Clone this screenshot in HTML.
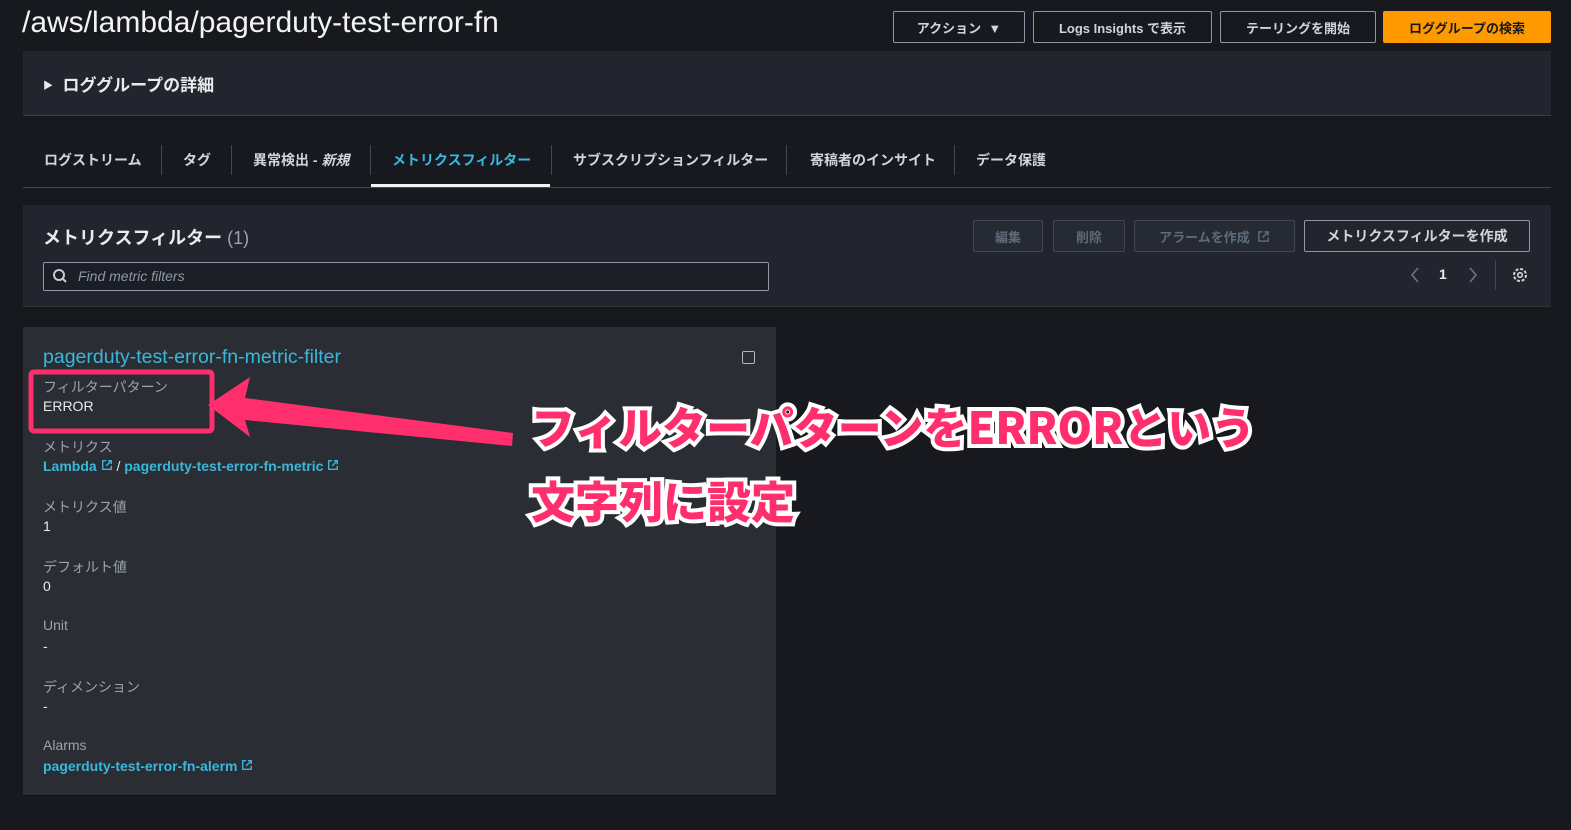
<!DOCTYPE html>
<html><head><meta charset="utf-8"><style>
*{box-sizing:border-box;margin:0;padding:0}
body{width:1571px;height:830px;background:#17191e;font-family:"Liberation Sans","Noto Sans CJK JP",sans-serif;color:#d1d5db;position:relative;overflow:hidden}
.a{position:absolute;white-space:nowrap}
.btn{position:absolute;height:32px;border:1px solid #8d99a8;border-radius:2px;color:#d1d5db;font-size:13px;font-weight:bold;display:flex;align-items:center;justify-content:center}
.dis{border-color:#414750;color:#5f6b7a;background:#262a33}
.tab{position:absolute;top:150px;font-size:14px;font-weight:bold;color:#d1d5db}
.sep{position:absolute;top:145px;width:1px;height:30px;background:#414750}
.lab{position:absolute;left:43px;font-size:14px;color:#9aa3ad}
.val{position:absolute;left:43px;font-size:14px;color:#e9ebed}
.lnk{color:#39b8dc;font-weight:bold}
.ann{position:absolute;font-size:44px;font-weight:900;color:#ff2f6e;-webkit-text-stroke:8px #fff;paint-order:stroke fill;font-family:"Noto Sans CJK JP",sans-serif}
</style></head><body>
<div class="a" style="left:22px;top:6px;font-size:30px;color:#f2f3f3">/aws/lambda/pagerduty-test-error-fn</div>
<div class="btn" style="left:893px;top:11px;width:132px">アクション&nbsp;&nbsp;▼</div>
<div class="btn" style="left:1033px;top:11px;width:179px">Logs Insights で表示</div>
<div class="btn" style="left:1220px;top:11px;width:156px">テーリングを開始</div>
<div class="btn" style="left:1383px;top:11px;width:168px;background:#ff9900;border-color:#ff9900;color:#16191f">ロググループの検索</div>

<div class="a" style="left:23px;top:51px;width:1528px;height:65px;background:#22252d;border-bottom:1px solid #3a3f47"></div>
<div class="a" style="left:43px;top:71px;font-size:17px;font-weight:bold;color:#e9ebed"><span style="font-size:10px;position:relative;top:-2px">▶</span>&nbsp; ロググループの詳細</div>

<div class="tab" style="left:44px">ログストリーム</div><div class="sep" style="left:161px"></div>
<div class="tab" style="left:183px">タグ</div><div class="sep" style="left:231px"></div>
<div class="tab" style="left:253px">異常検出 - <i>新規</i></div><div class="sep" style="left:370px"></div>
<div class="tab" style="left:392px;color:#39b8dc">メトリクスフィルター</div><div class="sep" style="left:551px"></div>
<div class="tab" style="left:573px">サブスクリプションフィルター</div><div class="sep" style="left:786px"></div>
<div class="tab" style="left:810px">寄稿者のインサイト</div><div class="sep" style="left:954px"></div>
<div class="tab" style="left:976px">データ保護</div>
<div class="a" style="left:371px;top:184px;width:179px;height:3px;background:#f2f3f3"></div>
<div class="a" style="left:23px;top:187px;width:1528px;height:1px;background:#414750"></div>

<div class="a" style="left:23px;top:205px;width:1528px;height:102px;background:#22252d;border-bottom:1px solid #333"></div>
<div class="a" style="left:43px;top:224px;font-size:18px;font-weight:bold;color:#e9ebed">メトリクスフィルター <span style="font-weight:normal;color:#9aa3ad">(1)</span></div>
<div class="a" style="left:43px;top:262px;width:726px;height:29px;border:1px solid #8d99a8;border-radius:2px;background:#1b1e24"></div>
<svg class="a" style="left:52px;top:268px" width="16" height="16" viewBox="0 0 16 16"><circle cx="7" cy="7" r="5" stroke="#c6ccd3" stroke-width="2" fill="none"/><path d="M10.5 10.5L14 14" stroke="#c6ccd3" stroke-width="2"/></svg>
<div class="a" style="left:78px;top:268px;font-size:14px;font-style:italic;color:#8d99a8">Find metric filters</div>
<div class="btn dis" style="left:973px;top:220px;width:70px">編集</div>
<div class="btn dis" style="left:1053px;top:220px;width:72px">削除</div>
<div class="btn dis" style="left:1134px;top:220px;width:161px">アラームを作成 &nbsp;<svg width="13" height="13" viewBox="0 0 14 14"><path d="M6 2H2v10h10V8M8 2h4v4M12 2L6 8" stroke="#5f6b7a" stroke-width="1.6" fill="none"/></svg></div>
<div class="btn" style="left:1304px;top:220px;width:226px;font-size:14px">メトリクスフィルターを作成</div>
<svg class="a" style="left:1408px;top:266px" width="14" height="18"><path d="M10 2L4 9l6 7" stroke="#6b7480" stroke-width="1.6" fill="none"/></svg>
<div class="a" style="left:1439px;top:266px;font-size:14px;font-weight:bold;color:#e9ebed">1</div>
<svg class="a" style="left:1466px;top:266px" width="14" height="18"><path d="M4 2l6 7-6 7" stroke="#6b7480" stroke-width="1.6" fill="none"/></svg>
<div class="a" style="left:1495px;top:260px;width:1px;height:30px;background:#414750"></div>
<svg class="a" style="left:1511px;top:266px" width="18" height="18" viewBox="0 0 18 18"><circle cx="9" cy="9" r="6" stroke="#d1d5db" stroke-width="2" fill="none" stroke-dasharray="3 1.7"/><circle cx="9" cy="9" r="2.3" stroke="#d1d5db" stroke-width="1.6" fill="none"/></svg>

<div class="a" style="left:23px;top:327px;width:753px;height:469px;background:#2a2d33;border-bottom:1px solid #111"></div>
<div class="a" style="left:43px;top:346px;font-size:19.5px;color:#39b8dc">pagerduty-test-error-fn-metric-filter</div>
<div class="a" style="left:742px;top:351px;width:13px;height:13px;border:1px solid #b0b7c0;border-radius:2px"></div>
<div class="lab" style="top:377px">フィルターパターン</div>
<div class="val" style="top:398px">ERROR</div>
<div class="lab" style="top:437px">メトリクス</div>
<div class="val" style="top:458px"><span class="lnk">Lambda</span> <svg width="12" height="12" viewBox="0 0 14 14"><path d="M6 2H2v10h10V8M8 2h4v4M12 2L6 8" stroke="#39b8dc" stroke-width="1.6" fill="none"/></svg> / <span class="lnk">pagerduty-test-error-fn-metric</span> <svg width="12" height="12" viewBox="0 0 14 14"><path d="M6 2H2v10h10V8M8 2h4v4M12 2L6 8" stroke="#39b8dc" stroke-width="1.6" fill="none"/></svg></div>
<div class="lab" style="top:497px">メトリクス値</div>
<div class="val" style="top:518px">1</div>
<div class="lab" style="top:557px">デフォルト値</div>
<div class="val" style="top:578px">0</div>
<div class="lab" style="top:617px">Unit</div>
<div class="val" style="top:638px">-</div>
<div class="lab" style="top:677px">ディメンション</div>
<div class="val" style="top:698px">-</div>
<div class="lab" style="top:737px">Alarms</div>
<div class="val" style="top:758px"><span class="lnk">pagerduty-test-error-fn-alerm</span> <svg width="12" height="12" viewBox="0 0 14 14"><path d="M6 2H2v10h10V8M8 2h4v4M12 2L6 8" stroke="#39b8dc" stroke-width="1.6" fill="none"/></svg></div>

<svg class="a" style="left:0;top:0" width="1571" height="830">
<rect x="31" y="372" width="181" height="59" rx="3" fill="none" stroke="#ff2f6e" stroke-width="5"/>
<polygon points="208,405 250,377 245,398 513,433 512,446 245,420 250,437" fill="#ff2f6e"/>
</svg>
<div class="ann" style="left:531px;top:393px">フィルターパターンをERRORという</div>
<div class="ann" style="left:531px;top:467px">文字列に設定</div>
</body></html>
